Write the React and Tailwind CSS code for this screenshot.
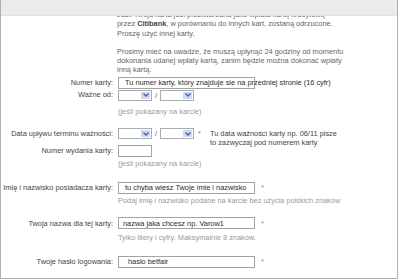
import React from 'react';

const font = { fontFamily: '"Liberation Sans", Arial, sans-serif' };

// small XP-style dropdown
const Select = () => (
  <div className="w-[34px] h-[11px] border border-[#a5acb5] bg-white flex justify-end p-[1px]">
    <div className="w-[9px] h-full bg-[#cddaf6] flex items-center justify-center">
      <svg width="6" height="4" viewBox="0 0 6 4">
        <path d="M0.5 0.5 L3 3 L5.5 0.5" fill="none" stroke="#4a5f8f" strokeWidth="1.3" />
      </svg>
    </div>
  </div>
);

const Input = ({ width, value, pad = 'pl-[6px]' }) => (
  <div className={`${width} h-[12px] border border-[#a3a3a3] bg-white flex items-center ${pad} whitespace-nowrap text-[#2a2a2a]`}>
    <span>{value}</span>
  </div>
);

const Label = ({ children }) => (
  <div className="text-right text-[#444] whitespace-nowrap">{children}</div>
);

const Star = () => <span className="text-[#888] ml-[6px]">*</span>;

export default function App() {
  return (
    <div className="w-[400px] h-[280px] bg-white overflow-hidden text-[7.4px] leading-[9.3px]" style={font}>
      <div className="w-[398px] h-[279px] border-l border-r border-b border-[#b0b0b0] flex flex-col">
        <div className="h-[16px] bg-[#ebebeb] border-b border-[#e2e2e2] shrink-0" />
        <div className="flex-1 overflow-hidden">
          <div className="-mt-[6px] pl-[116px] pr-[40px] text-[#666]">
            <p>Jeśli Twoja karta jest przetwarzana jako wpłata kartą kredytową</p>
            <p>przez <b className="text-[#444]">Citibank</b>, w porównaniu do innych kart, zostaną odrzucone.</p>
            <p>Proszę użyć innej karty.</p>
            <p className="mt-[9px]">Prosimy mieć na uwadze, że muszą upłynąć 24 godziny od momentu</p>
            <p>dokonania udanej wpłaty kartą, zanim będzie można dokonać wpłaty</p>
            <p>inną kartą.</p>
          </div>

          <div className="grid grid-cols-[112px_1fr] gap-x-[5px] items-center mt-[2px]">
            <Label>Numer karty:</Label>
            <Input width="w-[137px]" value="Tu numer karty, który znajduje sie na przedniej stronie (16 cyfr)" />

            <Label>Ważne od:</Label>
            <div className="flex items-center mt-[1px]">
              <Select />
              <span className="mx-[3px] text-[#555]">/</span>
              <Select />
            </div>
            <div />
            <div className="text-[#999] mt-[6px]">(jeśli pokazany na karcie)</div>
          </div>

          <div className="grid grid-cols-[112px_1fr] gap-x-[5px] mt-[13px]">
            <Label>Data upływu terminu ważności:</Label>
            <div className="flex items-start">
              <div className="flex items-center mt-[-1px]">
                <Select />
                <span className="mx-[3px] text-[#555]">/</span>
                <Select />
              </div>
              <span className="text-[#888] ml-[4px]">*</span>
              <div className="ml-[9px] text-[#444]">
                <p>Tu data ważności karty np. 06/11 pisze</p>
                <p>to zazwyczaj pod numerem karty</p>
              </div>
            </div>

            <div className="self-center -mt-[3px]"><Label>Numer wydania karty:</Label></div>
            <div className="-mt-[3px]">
              <div className="w-[34px] h-[12px] border border-[#a3a3a3] bg-white" />
            </div>
            <div />
            <div className="text-[#999] mt-[2px]">(jeśli pokazany na karcie)</div>
          </div>

          <div className="grid grid-cols-[112px_1fr] gap-x-[5px] items-center mt-[14px]">
            <Label>Imię i nazwisko posiadacza karty:</Label>
            <div className="flex items-center">
              <Input width="w-[137px]" value="tu chyba wiesz Twoje imie i nazwisko" />
              <Star />
            </div>
            <div />
            <div className="text-[#999] mt-[2px]">Podaj imię i nazwisko podane na karcie bez użycia polskich znaków</div>
          </div>

          <div className="grid grid-cols-[112px_1fr] gap-x-[5px] items-center mt-[12px]">
            <Label>Twoja nazwa dla tej karty:</Label>
            <div className="flex items-center">
              <Input width="w-[137px]" value="nazwa jaka chcesz np. Varow1" pad="pl-[4px]" />
              <Star />
            </div>
            <div />
            <div className="text-[#999] mt-[4px]">Tylko litery i cyfry. Maksymalnie 8 znaków.</div>
          </div>

          <div className="grid grid-cols-[112px_1fr] gap-x-[5px] items-center mt-[13px]">
            <Label>Twoje hasło logowania:</Label>
            <div className="flex items-center">
              <Input width="w-[137px]" value="hasło betfair" pad="pl-[9px]" />
              <Star />
            </div>
          </div>
        </div>
      </div>
    </div>
  );
}
